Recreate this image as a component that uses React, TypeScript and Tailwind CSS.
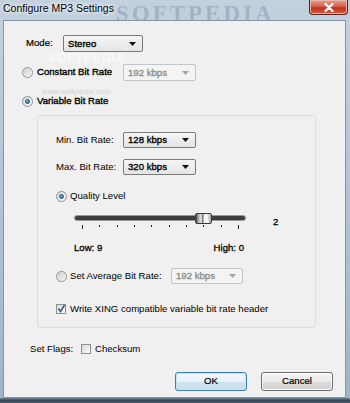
import type { FC } from "react";

const font = { fontFamily: '"Liberation Sans", Arial, sans-serif' };

const Combo: FC<{ value: string; w: string; h?: string; disabled?: boolean }> = ({ value, w, h = "h-[17px]", disabled }) => (
  <div
    className={`${w} ${h} flex items-center justify-between rounded-[2px] border pl-[4px] pr-[6px] ${
      disabled
        ? "border-[#c2c6ca] bg-[#f4f4f4] text-[#8d8d8d]"
        : "border-[#7a7a7a] bg-gradient-to-b from-[#f6f6f6] to-[#e4e4e4] text-black"
    }`}
  >
    <span className="leading-none [-webkit-text-stroke:0.35px]">{value}</span>
    <svg width="7" height="4" viewBox="0 0 7 4">
      <path d="M0 0h7L3.5 4z" fill={disabled ? "#a5a5a5" : "#111"} />
    </svg>
  </div>
);

const Radio: FC<{ checked?: boolean }> = ({ checked }) => (
  <div className="flex h-[11px] w-[11px] shrink-0 items-center justify-center rounded-full border border-[#8c8f91] bg-gradient-to-br from-[#d9d9d9] to-[#fbfbfb]">
    {checked ? (
      <div className="h-[5px] w-[5px] rounded-full border border-[#1a4f7c] bg-[radial-gradient(circle_at_35%_35%,#9fd6f5_0%,#2a83c4_60%,#1b5f98_100%)]" />
    ) : (
      <div className="h-[7px] w-[7px] rounded-full bg-gradient-to-br from-[#cfcfcf] to-[#f2f2f2]" />
    )}
  </div>
);

const Check: FC<{ checked?: boolean }> = ({ checked }) => (
  <div className="relative h-[10px] w-[10px] shrink-0 border border-[#8e8f8f] bg-gradient-to-br from-[#dcdcdc] to-[#fafafa]">
    {checked && (
      <svg className="absolute left-[0px] top-[-1px]" width="9" height="9" viewBox="0 0 9 9">
        <path d="M1.5 4.5 L3.5 7.5 L7.5 1" fill="none" stroke="#3f558c" strokeWidth="1.5" />
      </svg>
    )}
  </div>
);

const Btn: FC<{ label: string; focus?: boolean }> = ({ label, focus }) => (
  <div
    className={`flex h-[19px] w-[72px] items-center justify-center rounded-[3px] border text-black [-webkit-text-stroke:0.2px] ${
      focus
        ? "border-[#3c7fb1] bg-[linear-gradient(#f2f9fd_0%,#e6f0f7_50%,#d3e4ef_51%,#c7dbe8_100%)] shadow-[inset_0_0_0_1px_#c4e3f4]"
        : "border-[#707070] bg-[linear-gradient(#f4f4f4_0%,#ebebeb_50%,#dddddd_51%,#cfcfcf_100%)] shadow-[inset_0_0_0_1px_#fbfbfb]"
    }`}
  >
    {label}
  </div>
);

const ticks = [0, 1, 2, 3, 4, 5, 6, 7, 8, 9];

export default function App() {
  return (
    <div
      style={font}
      className="relative flex h-[403px] w-[350px] flex-col overflow-hidden bg-gradient-to-b from-[#c3d1de] via-[#b1c3d4] to-[#9fb4c9] text-[9.6px] text-black"
    >
      {/* title bar */}
      <div className="relative flex h-[20px] items-start justify-between">
        <span className="relative z-10 ml-[3px] mt-[2px] text-[10.5px] leading-[13px] text-black [text-shadow:0_0_6px_#ffffff,0_0_3px_#ffffff]">
          Configure MP3 Settings
        </span>
        <span
          className="pointer-events-none absolute left-[116px] top-[-3px] text-[23px] font-bold tracking-[3px] text-[#8797a8] opacity-50 blur-[0.6px]"
          style={{ fontFamily: '"Liberation Serif", serif' }}
        >
          SOFTPEDIA
        </span>
        <div className="mr-[2px] flex h-[15px] w-[39px] items-center justify-center rounded-b-[4px] border border-t-0 border-[#5a2020] bg-[linear-gradient(#e8a192_0%,#d2634f_45%,#c2331d_55%,#d35a3c_100%)] shadow-[inset_0_0_0_1px_#eeb6a8]">
          <svg width="10" height="9" viewBox="0 0 10 9">
            <path d="M1.5 1 L8.5 8 M8.5 1 L1.5 8" stroke="#ffffff" strokeWidth="2.2" strokeLinecap="round" />
          </svg>
        </div>
      </div>

      {/* client area */}
      <div className="relative ml-[3px] flex h-[378px] w-[343px] flex-col border border-[#8596a8] bg-[#f0f0f0]">
        <span className="pointer-events-none absolute left-[44px] top-[31px] text-[12px] leading-[13px] font-bold tracking-[1px] text-white opacity-60">
          SOFTPEDIA
        </span>
        <span className="pointer-events-none absolute left-[38px] top-[65px] text-[8px] text-[#d2d2d2]">
          www.softpedia.com
        </span>

        <div className="relative ml-[22px] mt-[14px] flex h-[17px] items-center">
          <span className="w-[37px] [-webkit-text-stroke:0.2px]">Mode:</span>
          <Combo value="Stereo" w="w-[80px]" />
        </div>

        <div className="relative ml-[18px] mt-[12px] flex h-[17px] items-center">
          <Radio />
          <span className="ml-[4px] w-[86px] [-webkit-text-stroke:0.35px]">Constant Bit Rate</span>
          <Combo value="192 kbps" w="w-[73px]" disabled />
        </div>

        <div className="relative ml-[18px] mt-[13px] flex h-[14px] items-center">
          <Radio checked />
          <span className="ml-[4px] [-webkit-text-stroke:0.35px]">Variable Bit Rate</span>
        </div>

        {/* VBR group */}
        <div className="ml-[33px] mt-[7px] flex h-[213px] w-[279px] flex-col rounded-[3px] border border-[#d5dfe5]">
          <div className="ml-[18px] mt-[16px] flex h-[16px] items-center">
            <span className="w-[67px]">Min. Bit Rate:</span>
            <Combo value="128 kbps" w="w-[73px]" h="h-[16px]" />
          </div>
          <div className="ml-[18px] mt-[11px] flex h-[16px] items-center">
            <span className="w-[67px]">Max. Bit Rate:</span>
            <Combo value="320 kbps" w="w-[73px]" h="h-[16px]" />
          </div>
          <div className="ml-[18px] mt-[14px] flex h-[14px] items-center">
            <Radio checked />
            <span className="ml-[3px]">Quality Level</span>
          </div>

          <div className="ml-[36px] mt-[8px] flex h-[19px] items-start">
            <div className="relative h-[19px] w-[172px]">
              <div className="absolute left-0 right-0 top-[4px] h-[6px] rounded-full border border-[#9a9a9a] bg-[#3d3d3d]" />
              <div className="absolute left-[121px] top-[2px] h-[11px] w-[17px] rounded-[2px] border border-[#3a3a3a] bg-[linear-gradient(90deg,#4a4a4a_0%,#bdbdbd_20%,#e6e6e6_35%,#6a6a6a_45%,#f2f2f2_55%,#f7f7f7_75%,#a0a0a0_100%)]" />
              <div className="absolute left-[8px] right-[7px] top-[14px] flex justify-between">
                {ticks.map((t) => (
                  <div key={t} className={`w-[1px] bg-[#222] ${t === 0 || t === 9 ? "h-[4px]" : "h-[2px]"}`} />
                ))}
              </div>
            </div>
            <span className="ml-[27px] mt-[4px] [-webkit-text-stroke:0.3px]">2</span>
          </div>

          <div className="ml-[36px] mt-[11px] flex h-[14px] w-[170px] items-center justify-between [-webkit-text-stroke:0.3px]">
            <span>Low: 9</span>
            <span>High: 0</span>
          </div>

          <div className="ml-[18px] mt-[13px] flex h-[16px] items-center">
            <Radio />
            <span className="ml-[3px] w-[101px]">Set Average Bit Rate:</span>
            <Combo value="192 kbps" w="w-[72px]" h="h-[16px]" disabled />
          </div>

          <div className="ml-[18px] mt-[18px] flex h-[14px] items-center">
            <Check checked />
            <span className="ml-[4px]">Write XING compatible variable bit rate header</span>
          </div>
        </div>

        <div className="ml-[26px] mt-[14px] flex h-[14px] items-center">
          <span className="w-[51px]">Set Flags:</span>
          <Check />
          <span className="ml-[4px]">Checksum</span>
        </div>

        <div className="ml-[171px] mt-[16px] flex h-[19px] items-center gap-[14px]">
          <Btn label="OK" focus />
          <Btn label="Cancel" />
        </div>
      </div>

      <div className="flex-1 bg-[linear-gradient(#6d7f90_0%,#34414d_60%,#56677a_100%)]" />
    </div>
  );
}
